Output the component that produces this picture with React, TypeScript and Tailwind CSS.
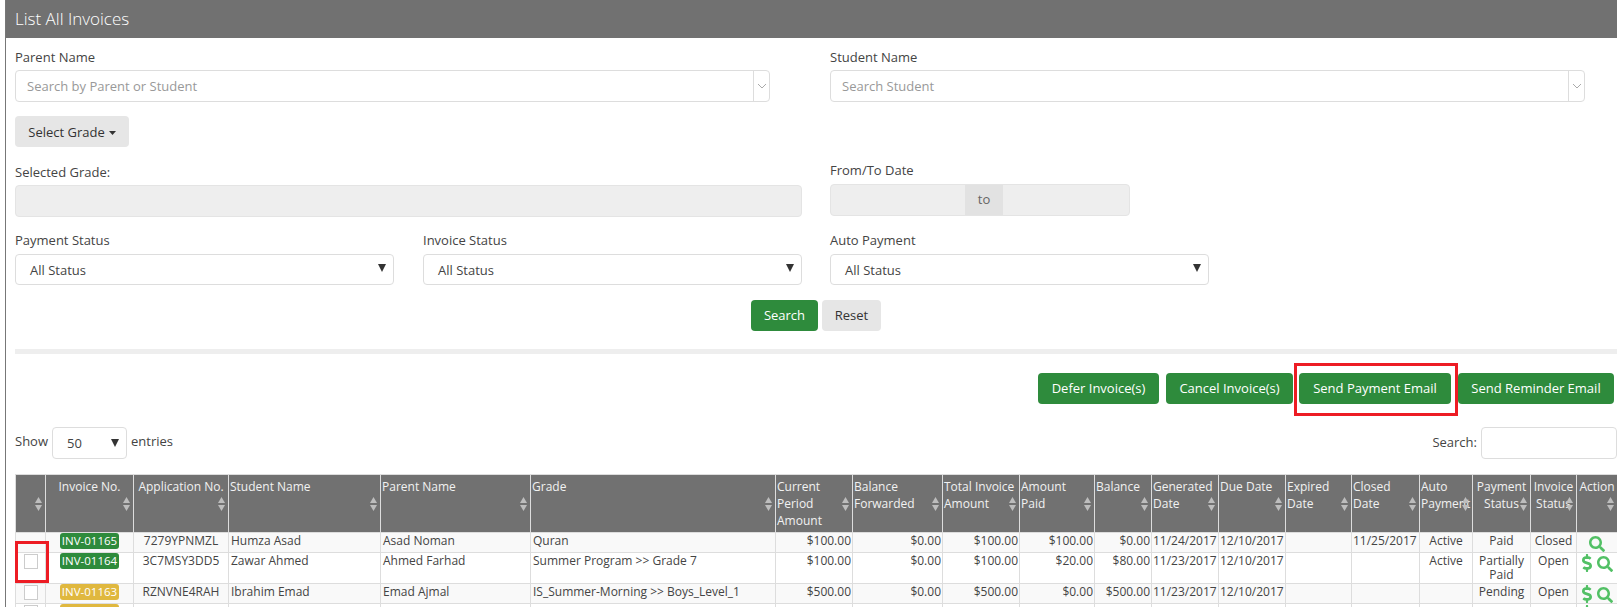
import { FaSearch, FaDollarSign } from "react-icons/fa";

const font = { fontFamily: '"Open Sans", sans-serif' };

function Caret() {
  return (
    <svg width="8" height="10" viewBox="0 0 8 10" className="shrink-0">
      <path d="M0 1h8L4 9z" fill="#333" />
    </svg>
  );
}

function Chevron() {
  return (
    <svg width="10" height="6" viewBox="0 0 10 6" fill="none" stroke="#aaa" strokeWidth="1">
      <path d="M1 1l4 4 4-4" />
    </svg>
  );
}

function SelectBox({ w, label }: { w: string; label: string }) {
  return (
    <div className={`${w} h-[31px] border border-[#ddd] rounded-[4px] bg-white flex items-center justify-between pl-[14px] pr-[7px] text-[13px] text-[#444]`}>
      <span className="pt-[2px]">{label}</span>
      <span className="-mt-[3px]"><Caret /></span>
    </div>
  );
}

function Combo({ w, placeholder }: { w: string; placeholder: string }) {
  return (
    <div className={`${w} h-[32px] border border-[#ddd] rounded-[4px] bg-white flex items-center text-[13px] text-[#999]`}>
      <span className="flex-1 pl-[11px] pt-[2px]">{placeholder}</span>
      <span className="w-[16px] h-full border-l border-[#ddd] flex items-center justify-center"><Chevron /></span>
    </div>
  );
}

function Sort() {
  return (
    <svg width="7" height="14" viewBox="0 0 7 14" className="absolute right-[3px] top-[22px]">
      <path d="M3.5 0L7 6H0z" fill="#bdbdbd" />
      <path d="M3.5 14L7 8H0z" fill="#bdbdbd" />
    </svg>
  );
}

const columns: { title: string; w: string; cls: string }[] = [
  { title: "", w: "w-[30px]", cls: "text-left" },
  { title: "Invoice No.", w: "w-[88px]", cls: "text-center" },
  { title: "Application No.", w: "w-[95px]", cls: "text-center" },
  { title: "Student Name", w: "w-[152px]", cls: "text-left" },
  { title: "Parent Name", w: "w-[150px]", cls: "text-left" },
  { title: "Grade", w: "w-[245px]", cls: "text-left" },
  { title: "Current Period Amount", w: "w-[77px]", cls: "text-left" },
  { title: "Balance Forwarded", w: "w-[90px]", cls: "text-left" },
  { title: "Total Invoice Amount", w: "w-[77px]", cls: "text-left" },
  { title: "Amount Paid", w: "w-[75px]", cls: "text-left" },
  { title: "Balance", w: "w-[57px]", cls: "text-left" },
  { title: "Generated Date", w: "w-[67px]", cls: "text-left" },
  { title: "Due Date", w: "w-[67px]", cls: "text-left" },
  { title: "Expired Date", w: "w-[66px]", cls: "text-left" },
  { title: "Closed Date", w: "w-[68px]", cls: "text-left" },
  { title: "Auto Payment", w: "w-[53px]", cls: "text-left" },
  { title: "Payment Status", w: "w-[58px]", cls: "text-center" },
  { title: "Invoice Status", w: "w-[46px]", cls: "text-center" },
  { title: "Action", w: "w-[41px]", cls: "text-center" },
];

type Row = {
  h: string;
  bg: string;
  check: boolean;
  badge: string;
  badgeBg: string;
  cells: string[];
  dollar: boolean;
};

const rows: Row[] = [
  { h: "h-[20px]", bg: "bg-[#f9f9f9]", check: false, badge: "INV-01165", badgeBg: "bg-[#2e8b3c]", dollar: false,
    cells: ["7279YPNMZL", "Humza Asad", "Asad Noman", "Quran", "$100.00", "$0.00", "$100.00", "$100.00", "$0.00", "11/24/2017", "12/10/2017", "", "11/25/2017", "Active", "Paid", "Closed"] },
  { h: "h-[31px]", bg: "bg-white", check: true, badge: "INV-01164", badgeBg: "bg-[#2e8b3c]", dollar: true,
    cells: ["3C7MSY3DD5", "Zawar Ahmed", "Ahmed Farhad", "Summer Program >> Grade 7", "$100.00", "$0.00", "$100.00", "$20.00", "$80.00", "11/23/2017", "12/10/2017", "", "", "Active", "Partially Paid", "Open"] },
  { h: "h-[20px]", bg: "bg-[#f9f9f9]", check: true, badge: "INV-01163", badgeBg: "bg-[#e0b83f]", dollar: true,
    cells: ["RZNVNE4RAH", "Ibrahim Emad", "Emad Ajmal", "IS_Summer-Morning >> Boys_Level_1", "$500.00", "$0.00", "$500.00", "$0.00", "$500.00", "11/23/2017", "12/10/2017", "", "", "", "Pending", "Open"] },
  { h: "h-[20px]", bg: "bg-white", check: true, badge: "", badgeBg: "bg-[#e0b83f]", dollar: true,
    cells: ["", "", "", "", "", "", "", "", "", "", "", "", "", "", "", ""] },
];

const cellAlign = [
  "text-center", "text-left", "text-left", "text-left", "text-right", "text-right", "text-right", "text-right", "text-right",
  "text-left", "text-left", "text-left", "text-left", "text-center", "text-center", "text-center",
];

function GreenButton({ children, w }: { children: string; w: string }) {
  return (
    <button className={`${w} h-[31px] rounded-[4px] bg-[#2e8b3c] text-white text-[13px] flex items-center justify-center`}>
      {children}
    </button>
  );
}

export default function App() {
  return (
    <div style={font} className="w-[1617px] h-[607px] overflow-hidden bg-white pl-[5px] relative text-[#444]">
      <div className="border-l border-[#777] h-full">
        <div className="h-[38px] bg-[#717171] text-white text-[17px] font-light flex items-center pl-[9px]">
          List All Invoices
        </div>

        <div className="pl-[9px] text-[13px]">
          <div className="flex pt-[9px]">
            <div className="w-[815px]">
              <div className="h-[20px] leading-[20px]">Parent Name</div>
              <div className="mt-[3px]"><Combo w="w-[755px]" placeholder="Search by Parent or Student" /></div>
            </div>
            <div>
              <div className="h-[20px] leading-[20px]">Student Name</div>
              <div className="mt-[3px]"><Combo w="w-[755px]" placeholder="Search Student" /></div>
            </div>
          </div>

          <button className="mt-[14px] w-[114px] h-[31px] pt-[2px] bg-[#e6e6e6] rounded-[4px] text-[13px] text-[#333] flex items-center justify-center gap-[4px]">
            Select Grade
            <svg width="7" height="4" viewBox="0 0 7 4"><path d="M0 0h7L3.5 4z" fill="#333" /></svg>
          </button>

          <div className="flex mt-[13px]">
            <div className="w-[815px]">
              <div className="h-[20px] leading-[20px] mt-[2px]">Selected Grade:</div>
              <div className="mt-[3px] w-[787px] h-[32px] bg-[#eee] border border-[#e4e4e4] rounded-[4px]" />
            </div>
            <div>
              <div className="h-[20px] leading-[20px]">From/To Date</div>
              <div className="mt-[4px] w-[300px] h-[32px] bg-[#eee] border border-[#e4e4e4] rounded-[4px] flex">
                <div className="w-[134px]" />
                <div className="w-[38px] bg-[#e2e2e2] flex items-center justify-center text-[#666]">to</div>
              </div>
            </div>
          </div>

          <div className="flex mt-[13px]">
            <div className="w-[408px]">
              <div className="h-[20px] leading-[20px]">Payment Status</div>
              <div className="mt-[4px]"><SelectBox w="w-[379px]" label="All Status" /></div>
            </div>
            <div className="w-[407px]">
              <div className="h-[20px] leading-[20px]">Invoice Status</div>
              <div className="mt-[4px]"><SelectBox w="w-[379px]" label="All Status" /></div>
            </div>
            <div>
              <div className="h-[20px] leading-[20px]">Auto Payment</div>
              <div className="mt-[4px]"><SelectBox w="w-[379px]" label="All Status" /></div>
            </div>
          </div>

          <div className="flex mt-[15px] pl-[736px] gap-[4px]">
            <GreenButton w="w-[67px]">Search</GreenButton>
            <button className="w-[59px] h-[31px] bg-[#e6e6e6] rounded-[4px] text-[13px] text-[#333]">Reset</button>
          </div>

          <div className="h-[5px] bg-[#eee] mt-[18px]" />

          <div className="flex justify-end pr-[3px] mt-[19px]">
            <GreenButton w="w-[121px]">Defer Invoice(s)</GreenButton>
            <GreenButton w="w-[127px] ml-[7px]">Cancel Invoice(s)</GreenButton>
            <GreenButton w="w-[152px] ml-[6px]">Send Payment Email</GreenButton>
            <GreenButton w="w-[156px] ml-[7px]">Send Reminder Email</GreenButton>
          </div>

          <div className="flex items-center justify-between mt-[23px] h-[32px]">
            <div className="flex items-center">
              <span className="-mt-[2px]">Show</span>
              <div className="ml-[4px] w-[75px] h-[32px] border border-[#ddd] rounded-[4px] flex items-center justify-between pl-[14px] pr-[7px]">
                <span className="pt-[2px]">50</span>
                <Caret />
              </div>
              <span className="ml-[4px] -mt-[2px]">entries</span>
            </div>
            <div className="flex items-center">
              <span>Search:</span>
              <div className="ml-[4px] w-[136px] h-[32px] border border-[#ddd] rounded-[4px]" />
            </div>
          </div>

          <table className="mt-[15px] w-[1602px] table-fixed border-collapse text-[12px]">
            <colgroup>
              {columns.map((c, i) => (
                <col key={i} className={c.w} />
              ))}
            </colgroup>
            <thead>
              <tr className="h-[58px] bg-[#717171]">
                {columns.map((c, i) => (
                  <th
                    key={i}
                    className={`relative border border-[#ddd] align-top pt-[3px] px-[1px] font-normal leading-[17px] text-[#f2f2f2] whitespace-normal ${c.cls}`}
                  >
                    {c.title}
                    <Sort />
                  </th>
                ))}
              </tr>
            </thead>
            <tbody>
              {rows.map((r, ri) => (
                <tr key={ri} className={`${r.h} ${r.bg}`}>
                  <td className="border border-[#ddd] align-top p-0">
                    {r.check && (
                      <div className="ml-[8px] mt-[1px] w-[14px] h-[15px] bg-white border border-[#ccc]" />
                    )}
                  </td>
                  <td className="border border-[#ddd] align-top p-0 text-center">
                    <span className={`inline-block align-top w-[59px] h-[16px] leading-[16px] rounded-[3px] text-[11.5px] text-white ${r.badgeBg}`}>
                      {r.badge}
                    </span>
                  </td>
                  {r.cells.map((t, i) => (
                    <td
                      key={i}
                      className={`border border-[#ddd] align-top px-[1px] pt-[1px] pb-0 leading-[14px] whitespace-normal ${i >= 1 && i <= 3 ? "pl-[2px]" : ""} ${cellAlign[i]}`}
                    >
                      {t}
                    </td>
                  ))}
                  <td className="border border-[#ddd] align-top p-0">
                    <div className="flex items-center justify-center gap-[5px] text-[#52c065] h-[18px] mt-[1px]">
                      {r.dollar && <FaDollarSign className="w-[10px] h-[18px]" />}
                      <FaSearch className="w-[16px] h-[16px] mt-[1px]" />
                    </div>
                  </td>
                </tr>
              ))}
            </tbody>
          </table>
        </div>
      </div>

      <div className="absolute left-[1294px] top-[363px] w-[164px] h-[53px] border-[3px] border-[#ed1c24]" />
      <div className="absolute left-[15px] top-[541px] w-[34px] h-[42px] border-[3px] border-[#ed1c24]" />
    </div>
  );
}
